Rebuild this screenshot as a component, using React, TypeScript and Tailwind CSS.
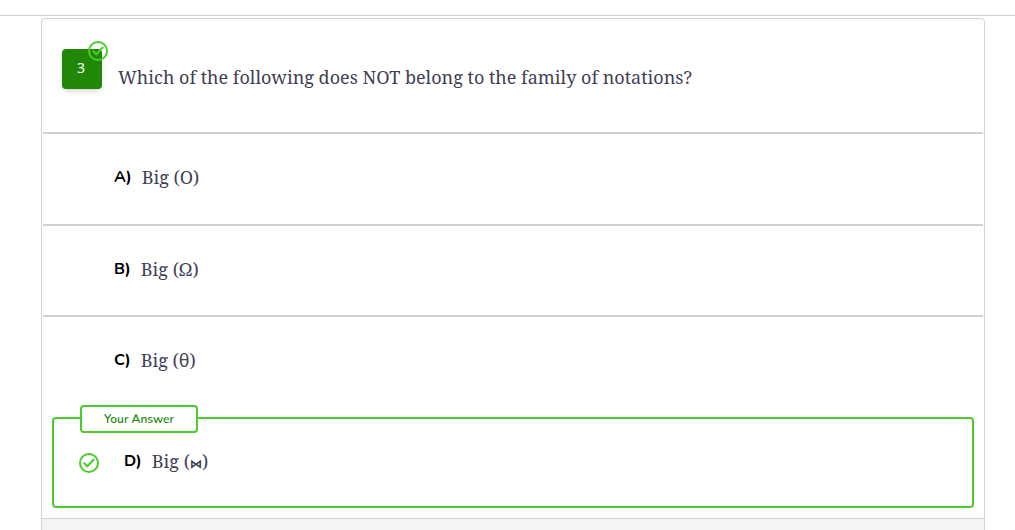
import type { ReactNode } from "react";

const SERIF = "font-['Noto_Serif','Liberation_Serif',serif]";

function CheckCircle({ className = "" }: { className?: string }) {
  return (
    <svg viewBox="0 0 20 20" className={`size-5 shrink-0 ${className}`} fill="none" stroke="#4bcb2c" aria-hidden="true">
      <circle cx="10" cy="10" r="9" strokeWidth="2" />
      <path d="M4.8 9.8 8.3 13.3 15.2 6" strokeWidth="2.1" />
    </svg>
  );
}

function Choice({ letter, children }: { letter: string; children: ReactNode }) {
  return (
    <p className="flex items-center gap-2.5 pb-1 leading-6">
      <span className="font-['Nunito','Lato',sans-serif] text-base leading-6 font-bold text-black">{letter})</span>
      <span className={`${SERIF} text-lg leading-6 text-[#3f3f56]`}>{children}</span>
    </p>
  );
}

export default function App() {
  return (
    <div className="h-screen overflow-hidden bg-white pt-[15px]">
      <main className="border-t border-[#d0d2d3] px-[30px] pt-0.5 pl-[41px]">
        <article className="rounded border border-[#d0d2d3]">
          <header className="mx-px flex h-[115px] items-start gap-4 border-b-2 border-[#d1d1d6] pt-[30px] pl-[19px]">
            <div className="relative flex size-10 shrink-0 items-center justify-center rounded bg-[#218807] pr-0.5 pb-0.5 font-['Noto_Sans',sans-serif] text-sm text-white shadow-md">
              3
              <CheckCircle className="absolute -top-2 -right-1.5" />
            </div>
            <h1 className={`${SERIF} pt-4 text-lg leading-6 text-[#3f3f56]`}>
              Which of the following does NOT belong to the family of notations?
            </h1>
          </header>
          <ol>
            <li className="mx-px flex h-[92px] items-center border-b-2 border-[#d1d1d6] pl-[71px]">
              <Choice letter="A">Big (O)</Choice>
            </li>
            <li className="mx-px flex h-[91px] items-center border-b-2 border-[#d1d1d6] pl-[71px]">
              <Choice letter="B">Big (Ω)</Choice>
            </li>
            <li className="mx-px flex h-[90px] items-center pl-[71px]">
              <Choice letter="C">Big (θ)</Choice>
            </li>
            <li className="relative mx-2.5 my-2.5 flex h-[91px] items-center gap-[25px] rounded border-2 border-[#4bcb2c] pl-[25px]">
              <strong className="absolute -top-3.5 left-[26px] flex h-7 w-[118px] items-center justify-center rounded border-2 border-[#4bcb2c] bg-white font-['Nunito','Lato',sans-serif] text-xs font-semibold text-[#218807]">
                Your Answer
              </strong>
              <CheckCircle />
              <Choice letter="D">
                Big (<span className="text-xs leading-none font-bold">⋈</span>)
              </Choice>
            </li>
          </ol>
          <footer className="h-14 border-t border-[#d0d2d3] bg-[#f4f4f4]" />
        </article>
      </main>
    </div>
  );
}
